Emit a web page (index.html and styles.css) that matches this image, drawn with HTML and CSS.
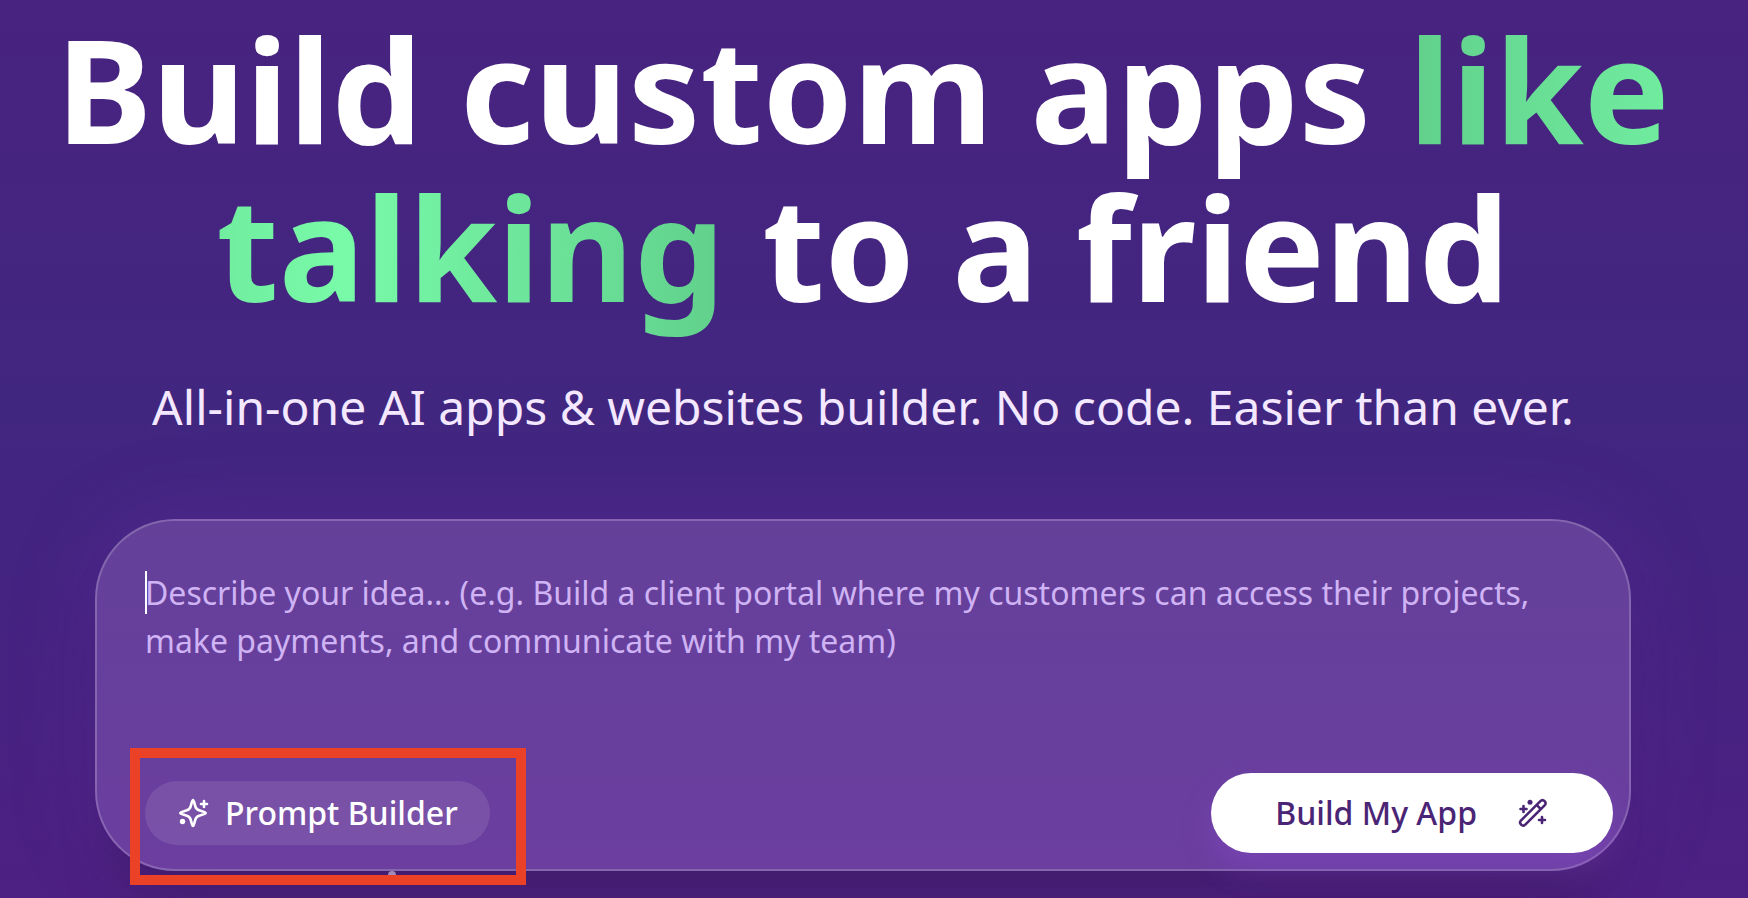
FILE: index.html
```html
<!DOCTYPE html>
<html lang="en">

<head>
	<meta charset="UTF-8">
	<meta name="viewport" content="width=device-width, initial-scale=1.0">
	<title>App builder</title>
	<link rel="stylesheet" href="styles.css">
</head>

<body>
	<main class="hero">
		<h1 class="title">Build custom apps <span class="accent">like talking</span> to a friend</h1>
		<p class="subtitle">All-in-one AI apps &amp; websites builder. No code. Easier than ever.</p>

		<form class="prompt">
			<div class="field">
				<textarea class="idea" rows="3" aria-label="Your idea" placeholder="Describe your idea... (e.g. Build a client portal where my customers can access their projects, make payments, and communicate with my team)"></textarea>
				<span class="caret"></span>
			</div>
			<div class="actions">
				<div class="tool">
					<button type="button" class="btn btnPrompt">
						<svg class="icon" viewBox="0 0 32 32" aria-hidden="true">
							<path d="M16 3C17.2 3 17.6 8.6 19 11C20.4 13.4 22.4 13.4 25 14.2C30 15.6 30 16.4 25 17.8C22.4 18.6 20.4 18.6 19 21C17.6 23.4 17.2 29 16 29C14.8 29 14.4 23.4 13 21C11.6 18.6 9.6 18.6 7 17.8C2 16.4 2 15.6 7 14.2C9.6 13.4 11.6 13.4 13 11C14.4 8.6 14.8 3 16 3Z" />
							<path d="M27 4V10M24 7H30" />
							<circle class="dot" cx="5.5" cy="24.5" r="2.7" />
						</svg>
						Prompt Builder
					</button>
					<span class="marker"></span>
				</div>
				<button type="submit" class="btn btnBuild">
					Build My App
					<svg class="icon" viewBox="0 0 32 32" aria-hidden="true">
						<path d="M23.4 4.1Q25.5 2 27.6 4.1T27.6 8.3L8.3 27.6Q6.2 29.7 4.1 27.6T4.1 23.4ZM19.6 7.9L23.8 12.1" />
						<path d="M6.5 9V15M3.5 12H9.5M25 20V26M22 23H28" />
						<circle class="dot" cx="13" cy="5.3" r="2.5" />
					</svg>
				</button>
			</div>
		</form>
		<span class="floatDot"></span>
	</main>
</body>

</html>
```
FILE: styles.css
```css
* {
	box-sizing: border-box;
}

body {
	margin: 0;
	min-height: 100vh;
	overflow: hidden;
	font-family: "Noto Sans", sans-serif;
	color: #fff;
	background: linear-gradient(#482380 0%, #412680 45%, #452381 70%, #4d2083 100%);
}

.hero {
	position: relative;
	padding: 9px 22px 27px 0;
	text-align: center;
}

.title {
	max-width: 1680px;
	margin: 0 auto;
	font-size: 144px;
	line-height: 158px;
	font-weight: 700;
}

.accent {
	color: transparent;
	background: linear-gradient(90deg, #61d08c 0%, #78faa8 50%, #61d08c 100%);
	-webkit-background-clip: text;
	background-clip: text;
}

.subtitle {
	margin: 48px 0 78px;
	font-size: 48px;
	line-height: 68px;
	color: #f3e8ff;
}

.prompt {
	max-width: 1536px;
	margin: 0 auto;
	padding: 48px 16px 16px 48px;
	border: 2px solid rgba(255, 255, 255, 0.2);
	border-radius: 80px;
	background: linear-gradient(#644199, #673f9d 45%, #6b3e9f);
	box-shadow: 0 0 90px rgba(126, 58, 190, 0.2), 0 50px 50px -24px rgba(45, 20, 70, 0.5);
}

.field {
	position: relative;
	margin-right: 32px;
}

.idea {
	display: block;
	width: 100%;
	height: 176px;
	padding: 0;
	border: 0;
	outline: 0;
	resize: none;
	background: none;
	color: #fff;
	font: 32px/48px "Noto Sans", sans-serif;
}

.idea::placeholder {
	color: #cfb3f4;
	opacity: 1;
}

.caret {
	position: absolute;
	left: 0;
	top: 2px;
	width: 2px;
	height: 43px;
	background: #fff;
}

.actions {
	display: flex;
	justify-content: space-between;
	align-items: center;
	margin-top: 28px;
}

.tool {
	position: relative;
}

.btn {
	display: flex;
	align-items: center;
	border: 0;
	border-radius: 40px;
	font: 500 32px/48px "Noto Sans", sans-serif;
	cursor: pointer;
}

.btnPrompt {
	gap: 16px;
	padding: 8px 32px;
	color: #fff;
	background: rgba(255, 255, 255, 0.1);
}

.btnBuild {
	gap: 40px;
	padding: 16px 64px;
	color: #4b2575;
	background: #fff;
	box-shadow: 0 16px 30px rgba(147, 80, 220, 0.3);
}

.icon {
	width: 32px;
	height: 32px;
	fill: none;
	stroke: currentColor;
	stroke-width: 2.6;
	stroke-linecap: round;
	stroke-linejoin: round;
}

.dot {
	fill: currentColor;
	stroke: none;
}

/* highlight frame around the prompt builder button */
.marker {
	position: absolute;
	z-index: 2;
	inset: -33px -36px -40px -15px;
	border: 10px solid #ea4127;
	pointer-events: none;
}

.floatDot {
	position: absolute;
	left: 388px;
	bottom: 19px;
	width: 8px;
	height: 8px;
	border-radius: 50%;
	background: #a08ab8;
}
```
